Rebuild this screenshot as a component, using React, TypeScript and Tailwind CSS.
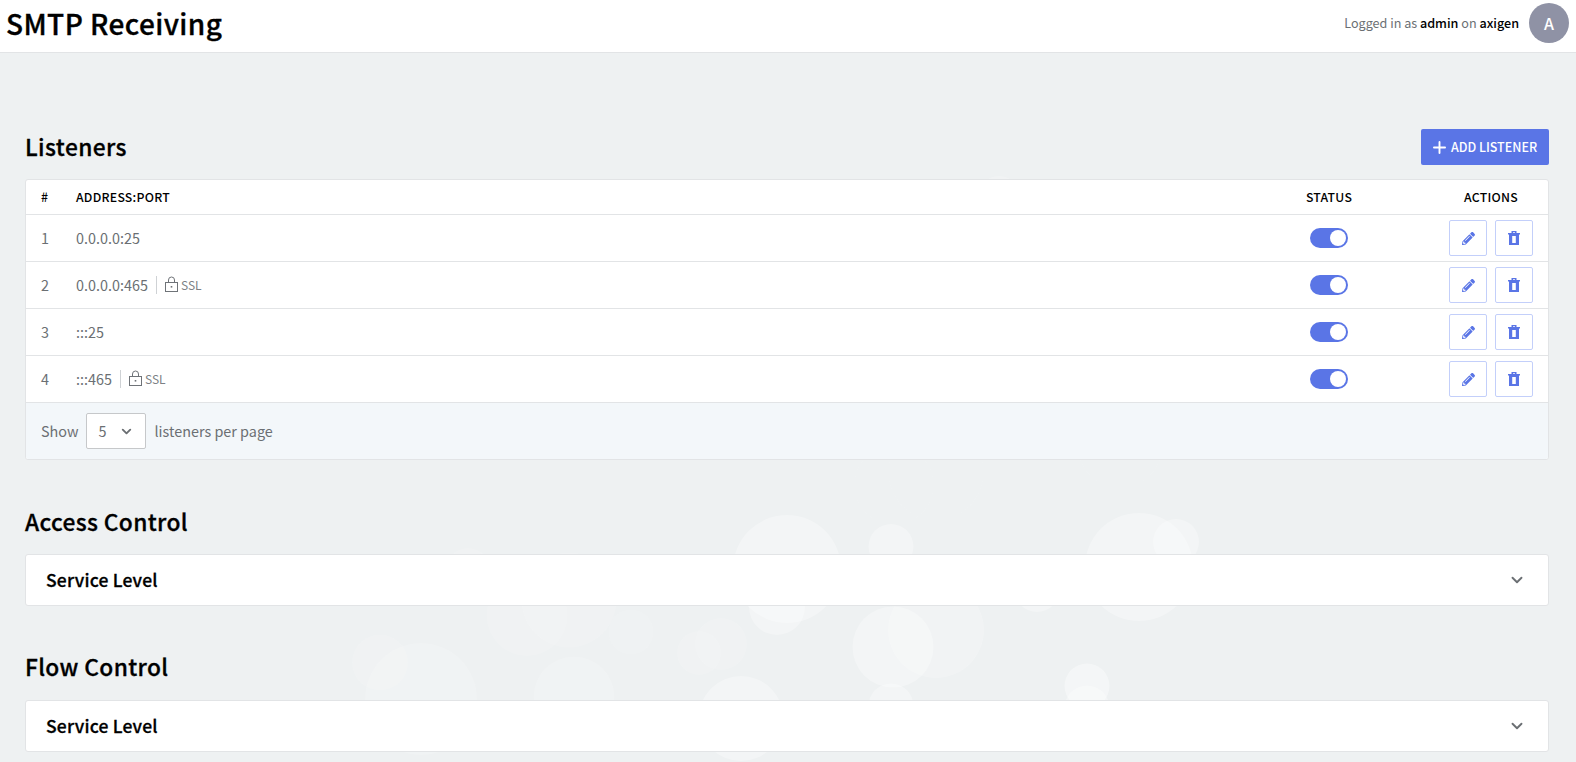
import { ChevronDown, Plus } from "lucide-react";
import { FaPencilAlt } from "react-icons/fa";

const bubbles: [number, number, number, number][] = [
  [787, 569, 54, 0.3],
  [777, 607, 28, 0.3],
  [468, 570, 22, 0.12],
  [527, 615.5, 40.5, 0.12],
  [569, 600, 47.5, 0.12],
  [631, 632, 22.5, 0.1],
  [380, 662.5, 28, 0.12],
  [421, 699, 56, 0.15],
  [574, 697, 40.5, 0.15],
  [699, 653, 22, 0.12],
  [721, 644, 26, 0.12],
  [741, 718.5, 42.5, 0.3],
  [894, 485, 40, 0.05],
  [936, 472, 48, 0.05],
  [997, 503, 22.5, 0.05],
  [1120, 445, 43, 0.05],
  [999, 198.5, 22.5, 0.2],
  [891, 546.5, 22.5, 0.3],
  [1139, 567, 54, 0.3],
  [1176, 542, 23, 0.3],
  [1037, 589, 23, 0.3],
  [893, 647, 40.5, 0.3],
  [936, 630, 48, 0.2],
  [891, 706, 22.5, 0.3],
  [1087, 686, 22.5, 0.38],
  [1087, 708, 22.5, 0.3],
];

const rows = [
  { n: 1, addr: "0.0.0.0:25", ssl: false },
  { n: 2, addr: "0.0.0.0:465", ssl: true },
  { n: 3, addr: ":::25", ssl: false },
  { n: 4, addr: ":::465", ssl: true },
];

function Lock() {
  return (
    <svg width="15" height="17" viewBox="0 0 15 17" fill="none" stroke="#6f7378" strokeWidth="1">
      <rect x="1.5" y="6.5" width="12" height="9" />
      <path d="M4.5 6.5V4a3 3 0 0 1 6 0v2.500" />
      <rect x="6.700" y="10" width="1.600" height="1.600" fill="#6f7378" stroke="none" />
    </svg>
  );
}

function Trash() {
  return (
    <svg width="12" height="14" viewBox="0 0 12 14" fill="#5a75e6">
      <path
        d="M0 2h3.500V0h5v2H12v1.500h-1V14H1V3.500H0zM5 1.300V2h2v-.7zM4.200 5v7h3.600V5z"
        fillRule="evenodd"
      />
    </svg>
  );
}

function Row({ n, addr, ssl }: { n: number; addr: string; ssl: boolean }) {
  return (
    <div className="flex h-[47px] items-center border-t border-[#e2e4e6] text-[14.4px]">
      <div className="w-[50px] pl-[15px] text-[#6b6f73]">{n}</div>
      <div className="flex flex-1 items-center text-[#6b6f73]">
        <span>{addr}</span>
        {ssl && (
          <span className="ml-[8px] flex h-[18px] items-center gap-[2px] border-l border-[#cfd2d5] pl-[7px] text-[12px] text-[#7d8185]">
            <Lock />
            SSL
          </span>
        )}
      </div>
      <div className="flex w-[76px] justify-center">
        <span className="flex h-[20px] w-[38px] items-center justify-end rounded-full bg-[#5a75e6] pr-[2px]">
          <span className="size-[16px] rounded-full bg-white" />
        </span>
      </div>
      <div className="ml-[82px] flex gap-[8px] pr-[15px]">
        <button className="flex h-[36px] w-[38px] items-center justify-center rounded-[2px] border border-[#c3cffa]">
          <FaPencilAlt className="size-[13px] text-[#5a75e6]" />
        </button>
        <button className="flex h-[36px] w-[38px] items-center justify-center rounded-[2px] border border-[#c3cffa]">
          <Trash />
        </button>
      </div>
    </div>
  );
}

function Accordion({ title, className }: { title: string; className: string }) {
  return (
    <div className={`${className} mr-[2px] flex h-[52px] items-center justify-between rounded-[3px] border border-[#e2e4e6] bg-white pl-[20px] pr-[22px]`}>
      <span className="pt-[1px] text-[17.5px] font-medium tracking-[0.2px] text-black [-webkit-text-stroke:0.3px_black]">{title}</span>
      <ChevronDown className="size-[18px] text-[#6b6f73]" strokeWidth={2.500} />
    </div>
  );
}

export default function App() {
  return (
    <div className="relative flex h-screen flex-col overflow-hidden bg-[#eef1f2] font-['Noto_Sans_CJK_SC',sans-serif] text-base">
      <svg className="absolute inset-0 h-full w-full" fill="white">
        {bubbles.map(([cx, cy, r, o], i) => (
          <circle key={i} cx={cx} cy={cy} r={r} fillOpacity={o} />
        ))}
      </svg>

      <header className="relative flex h-[53px] shrink-0 items-center justify-between border-b border-[#e2e4e6] bg-white pb-[6px] pl-[6px] pr-[7px]">
        <h1 className="text-[28px] font-medium leading-none tracking-[0.43px] text-black [-webkit-text-stroke:0.35px_black]">
          SMTP Receiving
        </h1>
        <div className="flex items-center gap-[10px]">
          <span className="text-[12.600px] text-[#6b6f73]">
            Logged in as <b className="font-medium text-black">admin</b> on{" "}
            <b className="font-medium text-black">axigen</b>
          </span>
          <span className="flex size-[40px] items-center justify-center rounded-full bg-[#8f92a5] text-[16px] font-medium text-white">
            A
          </span>
        </div>
      </header>

      <main className="relative ml-[25px] mr-[25px] flex-1">
        <div className="mt-[76px] flex h-[36px] items-center justify-between">
          <h2 className="text-[22.750px] font-medium tracking-[0.4px] text-black [-webkit-text-stroke:0.3px_black]">Listeners</h2>
          <button className="mr-[2px] flex h-[36px] w-[128px] items-center justify-center gap-[5px] rounded-[2px] bg-[#5a75e6] text-[12.500px] font-medium text-white">
            <Plus className="-mx-[3px] size-[19px]" strokeWidth={2.400} />
            ADD LISTENER
          </button>
        </div>

        <section className="mr-[2px] mt-[14px] overflow-hidden rounded-[3px] border border-[#e2e4e6] bg-white">
          <div className="flex h-[34px] items-center pt-[1px] text-[12.250px] font-medium tracking-[0.25px] text-black">
            <div className="w-[50px] pl-[15px]">#</div>
            <div className="flex-1">ADDRESS:PORT</div>
            <div className="w-[76px] text-center">STATUS</div>
            <div className="ml-[82px] w-[99px] pr-[15px] text-center">ACTIONS</div>
          </div>
          {rows.map((r) => (
            <Row key={r.n} {...r} />
          ))}
          <div className="flex h-[57px] items-center border-t border-[#e2e4e6] bg-[#f3f7fa] pl-[15px] text-[14.4px] text-[#6b6f73]">
            <span>Show</span>
            <span className="ml-[7px] flex h-[36px] w-[60px] items-center justify-between rounded-[2px] border border-[#c6c8ca] bg-white pl-[12px] pr-[11px]">
              5
              <ChevronDown className="size-[15px] text-[#6b6f73]" strokeWidth={3} />
            </span>
            <span className="ml-[9px]">listeners per page</span>
          </div>
        </section>

        <h2 className="mt-[42px] text-[22.750px] font-medium leading-[40px] tracking-[0.35px] text-black [-webkit-text-stroke:0.3px_black]">
          Access Control
        </h2>
        <Accordion title="Service Level" className="mt-[12px]" />

        <h2 className="mt-[41px] text-[22.750px] font-medium leading-[40px] tracking-[0.35px] text-black [-webkit-text-stroke:0.3px_black]">
          Flow Control
        </h2>
        <Accordion title="Service Level" className="mt-[13px]" />
      </main>
    </div>
  );
}
